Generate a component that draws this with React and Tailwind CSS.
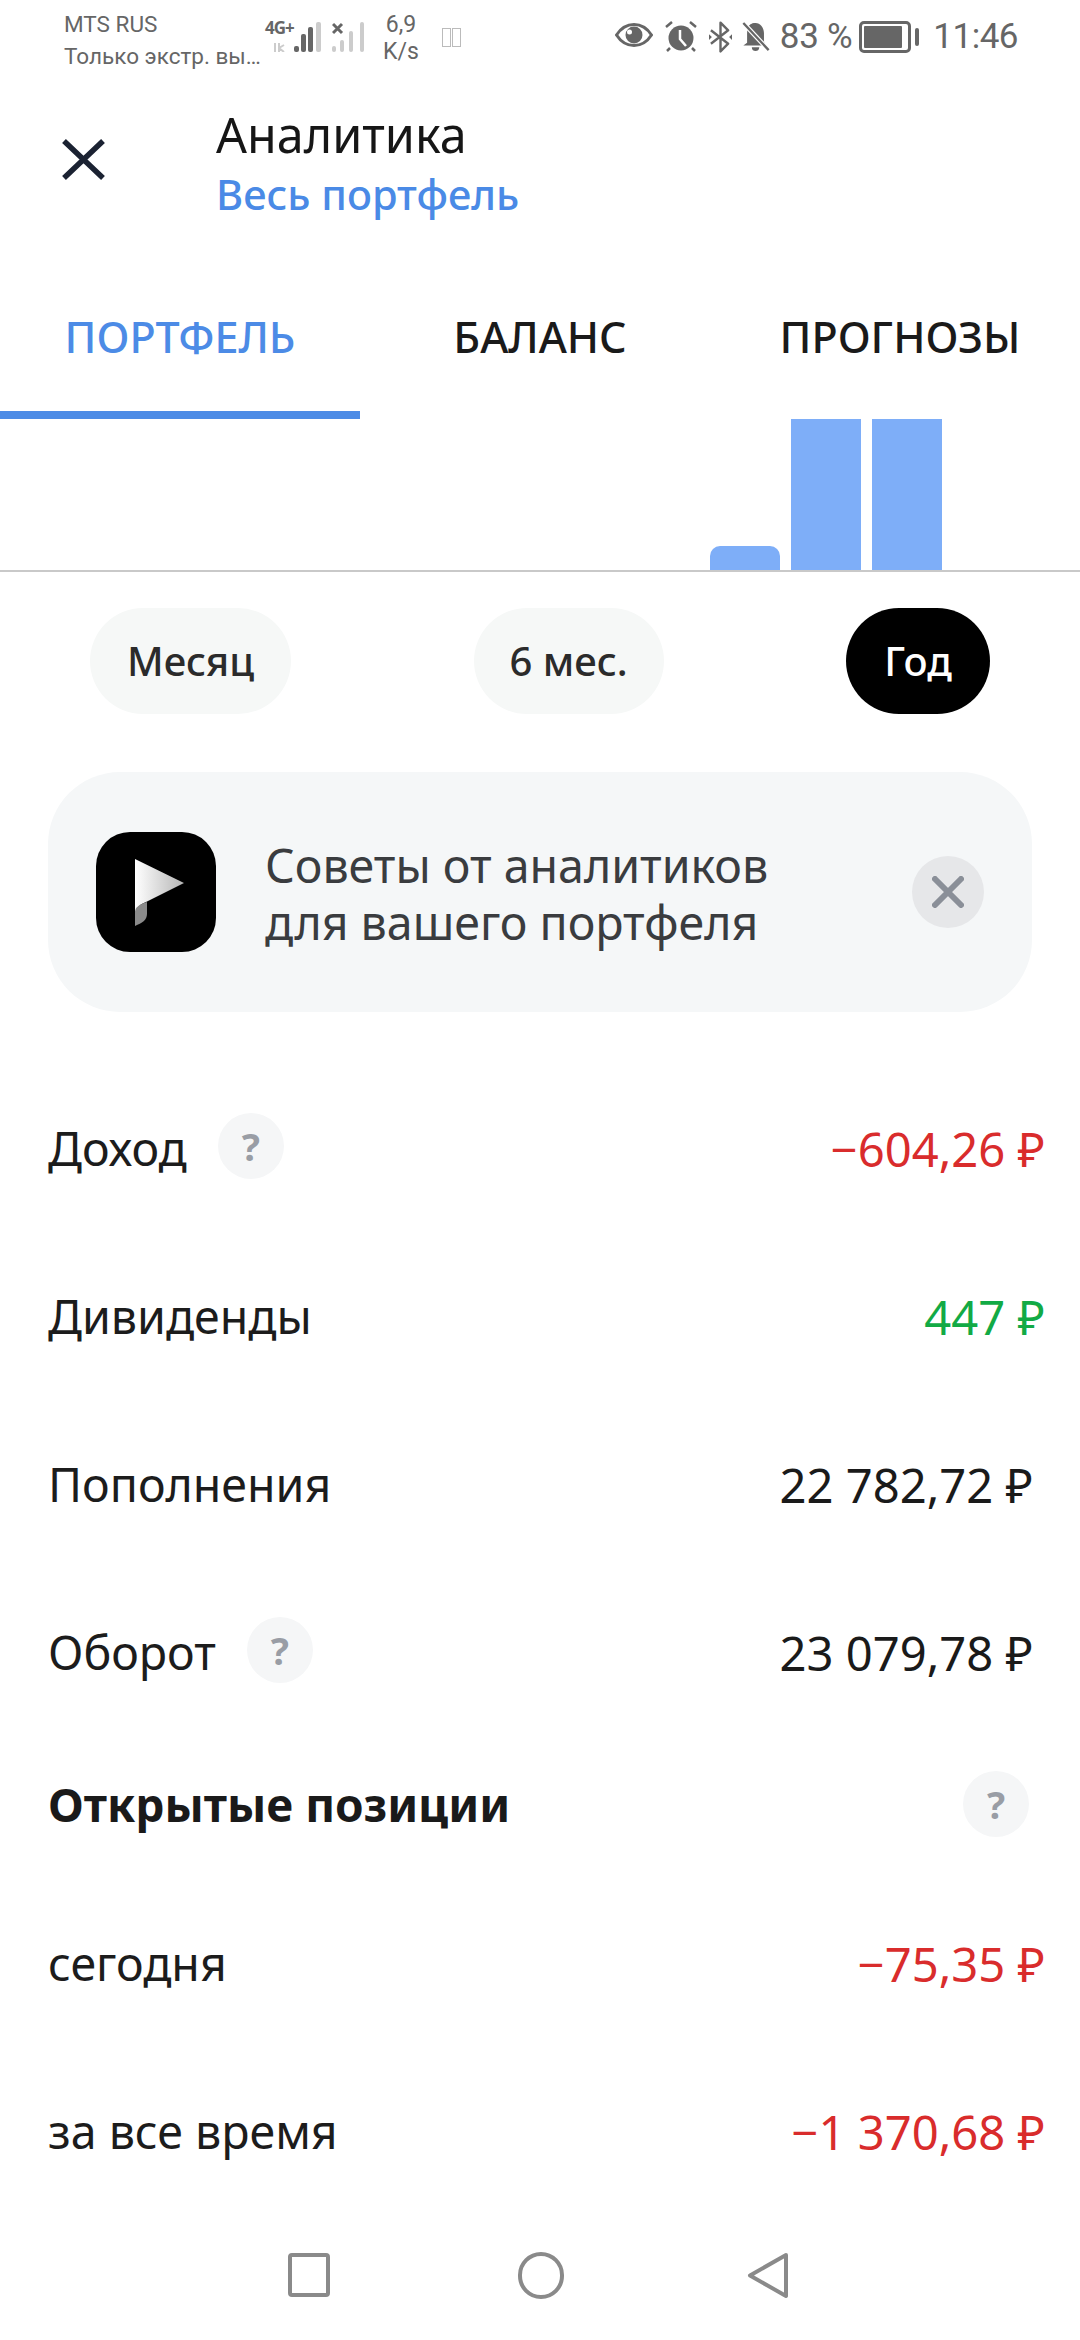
import React from "react";

const font = { fontFamily: '"Noto Sans", "Liberation Sans", sans-serif' };
const roboto = { fontFamily: "Roboto, sans-serif" };

function Question({ className }) {
  return (
    <div className={"flex h-[66px] w-[66px] shrink-0 items-center justify-center rounded-full bg-[#f5f6f7] text-[38px] font-bold text-[#999da5] " + (className || "")}>?</div>
  );
}

function Row({ label, value, color, help, helpClass, right }) {
  return (
    <div className={"flex h-[168px] items-center justify-between pl-[48px] " + right}>
      <div className="flex items-center">
        <span className="text-[46.5px] text-[#1c1c1c]">{label}</span>
        {help && <Question className={helpClass} />}
      </div>
      <span className={"text-[47.200px] " + color}>{value}</span>
    </div>
  );
}

export default function App() {
  return (
    <div className="flex h-[2340px] w-[1080px] flex-col overflow-hidden bg-white" style={font}>
      {/* status bar */}
      <div className="flex h-[72px] items-start justify-between pl-[64px] pr-[62px] text-[#666]">
        <div className="flex items-start">
          <div className="flex w-[201px] flex-col pt-[8px] text-[22.500px] leading-[32px]" style={roboto}>
            <span>MTS RUS</span>
            <span className="whitespace-nowrap">Только экстр. вы…</span>
          </div>
          <div className="relative mt-[22px] h-[30px] w-[56px]">
            <span className="absolute left-0 top-[-3px] text-[17px] font-bold leading-[18px] tracking-[-1px]">4G+</span>
            <svg className="absolute left-0 top-0" width="56" height="30" viewBox="0 0 56 30">
              <path d="M10 21v9M14 30v-9M14 26l5-3M14 26l5 4" stroke="#ccc" strokeWidth="2" fill="none" />
              <rect x="29" y="24" width="5" height="6" rx="2" fill="#666" />
              <rect x="36" y="12" width="5" height="18" rx="2" fill="#666" />
              <rect x="43" y="5" width="5" height="25" rx="2" fill="#666" />
              <rect x="51" y="0" width="5" height="30" rx="2" fill="#ccc" />
            </svg>
          </div>
          <div className="relative ml-[11px] mt-[22px] h-[30px] w-[33px]">
            <svg className="absolute left-0 top-0" width="33" height="30" viewBox="0 0 33 30">
              <rect x="0" y="24" width="4" height="6" rx="2" fill="#ccc" />
              <rect x="8" y="18" width="4" height="12" rx="2" fill="#ccc" />
              <rect x="17" y="9" width="4" height="21" rx="2" fill="#ccc" />
              <rect x="28" y="0" width="4" height="30" rx="2" fill="#ccc" />
              <path d="M1 2l9 9M10 2l-9 9" stroke="#666" strokeWidth="3" fill="none" />
            </svg>
          </div>
          <div className="ml-[19px] flex w-[34px] flex-col items-center pt-[11px] text-[23px] leading-[27px]" style={roboto}>
            <span>6,9</span>
            <span>K/s</span>
          </div>
          <div className="ml-[24px] mt-[28px] flex gap-[1px]">
            <div className="h-[19px] w-[9px] border border-[#bbb]" />
            <div className="h-[19px] w-[9px] border border-[#bbb]" />
          </div>
        </div>
        <div className="flex items-center pt-[20px]">
          <svg className="mb-[5px]" width="38" height="24" viewBox="0 0 38 24">
            <path d="M1.500 12C6 5 12 1.500 19 1.500S32 5 36.500 12C32 19 26 22.500 19 22.500S6 19 1.500 12Z" fill="none" stroke="#666" strokeWidth="3" />
            <circle cx="19" cy="12" r="8.500" fill="#666" />
            <circle cx="14.500" cy="9" r="2.500" fill="#fff" />
          </svg>
          <svg className="ml-[12px]" width="32" height="32" viewBox="0 0 32 32">
            <circle cx="16" cy="17" r="12.500" fill="#666" />
            <path d="M15 9v9l6 7" fill="none" stroke="#fff" strokeWidth="2.500" />
            <path d="M1 6l6-5M31 6l-6-5M5 27l-3 3M27 27l3 3" stroke="#666" strokeWidth="2.500" />
          </svg>
          <svg className="ml-[12px]" width="23" height="34" viewBox="0 0 24 34">
            <path d="M2 10l18 14-8 8V2l8 8L2 24" fill="none" stroke="#666" strokeWidth="2.500" strokeLinejoin="round" />
            <path d="M0 14l3 3-3 3zM24 14l-3 3 3 3z" fill="#666" />
          </svg>
          <svg className="ml-[10px]" width="28" height="30" viewBox="0 0 29 32">
            <path d="M14 1c-6 0-9 5-9 11v10l-4 3h24L14 1Z" fill="#666" />
            <path d="M7 10l15 15h4l-3-3V12c0-6-4-11-9-11-3 0-5 1-7 3Z" fill="#666" />
            <path d="M10 27h8c0 3-2 4-4 4s-4-1-4-4Z" fill="#666" />
            <path d="M1 1l27 29" stroke="#fff" strokeWidth="5" />
            <path d="M1 1l27 29" stroke="#666" strokeWidth="2.500" />
          </svg>
          <span className="ml-[10px] whitespace-nowrap text-[35px] leading-[34px] tracking-[-0.3px]" style={roboto}>83 %</span>
          <div className="ml-[7px] flex items-center">
            <div className="flex h-[32px] w-[52px] items-center rounded-[5px] border-[3px] border-[#666] p-[2px]">
              <div className="h-full w-[38px] rounded-[1px] bg-[#666]" />
            </div>
            <div className="ml-[4px] h-[18px] w-[4px] rounded-full bg-[#666]" />
          </div>
          <span className="ml-[14px] text-[35px] leading-[34px] tracking-[-0.5px]" style={roboto}>11:46</span>
        </div>
      </div>

      {/* header */}
      <div className="flex h-[198px] items-start">
        <svg className="ml-[62px] mt-[67px]" width="43" height="41" viewBox="0 0 43 41">
          <path d="M2 2l39 37M41 2L2 39" stroke="#1b2232" strokeWidth="5.500" fill="none" />
        </svg>
        <div className="ml-[111px] flex flex-col pt-[35px]">
          <span className="text-[48.500px] leading-[54px] text-[#161616]">Аналитика</span>
          <span className="mt-[6px] text-[41.500px] font-medium leading-[54px] text-[#4a8ae6]">Весь портфель</span>
        </div>
      </div>

      {/* tabs */}
      <div className="flex h-[149px]">
        <div className="flex w-[360px] flex-col border-b-[8px] border-[#4c8be6]">
          <span className="flex h-[134px] items-center justify-center text-[43px] font-medium text-[#4c8be6]">ПОРТФЕЛЬ</span>
        </div>
        <div className="flex w-[360px] justify-center">
          <span className="flex h-[134px] items-center text-[43px] font-medium text-[#1a1a1a]">БАЛАНС</span>
        </div>
        <div className="flex w-[360px] justify-center">
          <span className="flex h-[134px] items-center text-[43px] font-medium text-[#1a1a1a]">ПРОГНОЗЫ</span>
        </div>
      </div>

      {/* chart */}
      <div className="flex h-[153px] items-end gap-[11px] border-b-2 border-[#c9c9c9] pl-[710px]">
        <div className="h-[24px] w-[70px] rounded-t-[10px] bg-[#7eaef8]" />
        <div className="h-[151px] w-[70px] bg-[#7eaef8]" />
        <div className="h-[151px] w-[70px] bg-[#7eaef8]" />
      </div>

      {/* period pills */}
      <div className="mt-[36px] flex justify-between px-[90px]">
        <div className="flex h-[106px] w-[201px] items-center justify-center rounded-full bg-[#f6f8f7] text-[40px] font-medium text-[#2b2b2b]">Месяц</div>
        <div className="flex h-[106px] w-[190px] items-center justify-center rounded-full bg-[#f6f8f7] text-[40px] font-medium text-[#2b2b2b]">6 мес.</div>
        <div className="flex h-[106px] w-[144px] items-center justify-center rounded-full bg-black text-[40px] font-medium text-white">Год</div>
      </div>

      {/* advice card */}
      <div className="mx-[48px] mt-[58px] flex h-[240px] items-center justify-between rounded-[72px] bg-[#f5f7f8] pl-[48px] pr-[48px]">
        <svg className="shrink-0" width="120" height="120" viewBox="0 0 120 120">
          <defs>
            <linearGradient id="flag" x1="0" y1="0" x2="1" y2="0">
              <stop offset="0" stopColor="#ffffff" />
              <stop offset="1" stopColor="#b5b5b5" />
            </linearGradient>
          </defs>
          <rect width="120" height="120" rx="34" fill="#000" />
          <path d="M39 27L88 51L50 70C42 73 39 78 39 84Z" fill="url(#flag)" />
          <path d="M39 94V80C39 75 44 72 51 70V82C51 88 46 91 39 94Z" fill="#8a8a8a" />
        </svg>
        <p className="ml-[49px] w-[540px] flex-1 pt-[3px] text-[46.500px] leading-[57px] text-[#3a3c3f]">Советы от аналитиков для вашего портфеля</p>
        <div className="ml-[60px] flex h-[72px] w-[72px] shrink-0 items-center justify-center rounded-full bg-[#e6e7e9]">
          <svg width="32" height="32" viewBox="0 0 32 32">
            <path d="M3 3l26 26M29 3L3 29" stroke="#8a8f98" strokeWidth="6" strokeLinecap="round" fill="none" />
          </svg>
        </div>
      </div>

      {/* rows */}
      <div className="mt-[53px] flex flex-col">
        <Row label="Доход" value="−604,26 ₽" color="text-[#d92c2c]" help helpClass="ml-[31px] mb-[6px]" right="pr-[35px]" />
        <Row label="Дивиденды" value="447 ₽" color="text-[#12aa45]" right="pr-[35px]" />
        <Row label="Пополнения" value="22 782,72 ₽" color="text-[#1a1a1a]" right="pr-[47px]" />
        <Row label="Оборот" value="23 079,78 ₽" color="text-[#1a1a1a]" help helpClass="ml-[31px] mb-[6px]" right="pr-[47px]" />
        <div className="flex h-[143px] items-start justify-between pl-[48px] pr-[51px] pt-[34px]">
          <span className="text-[46px] font-bold leading-[66px] text-[#1a1a1a]">Открытые позиции</span>
          <Question />
        </div>
        <Row label="сегодня" value="−75,35 ₽" color="text-[#d92c2c]" right="pr-[35px]" />
        <Row label="за все время" value="−1 370,68 ₽" color="text-[#d92c2c]" right="pr-[35px]" />
      </div>

      {/* nav bar */}
      <div className="flex flex-1 items-start pl-[288px] pt-[36px]">
        <div className="mt-[1px] h-[44px] w-[42px] rounded-[4px] border-[4px] border-[#8a8a8a]" />
        <div className="ml-[188px] h-[47px] w-[46px] rounded-full border-[4px] border-[#8a8a8a]" />
        <svg className="ml-[183px]" width="42" height="47" viewBox="0 0 42 47">
          <path d="M39 3L3 23.500L39 44Z" fill="none" stroke="#8a8a8a" strokeWidth="4" strokeLinejoin="round" />
        </svg>
      </div>
    </div>
  );
}
